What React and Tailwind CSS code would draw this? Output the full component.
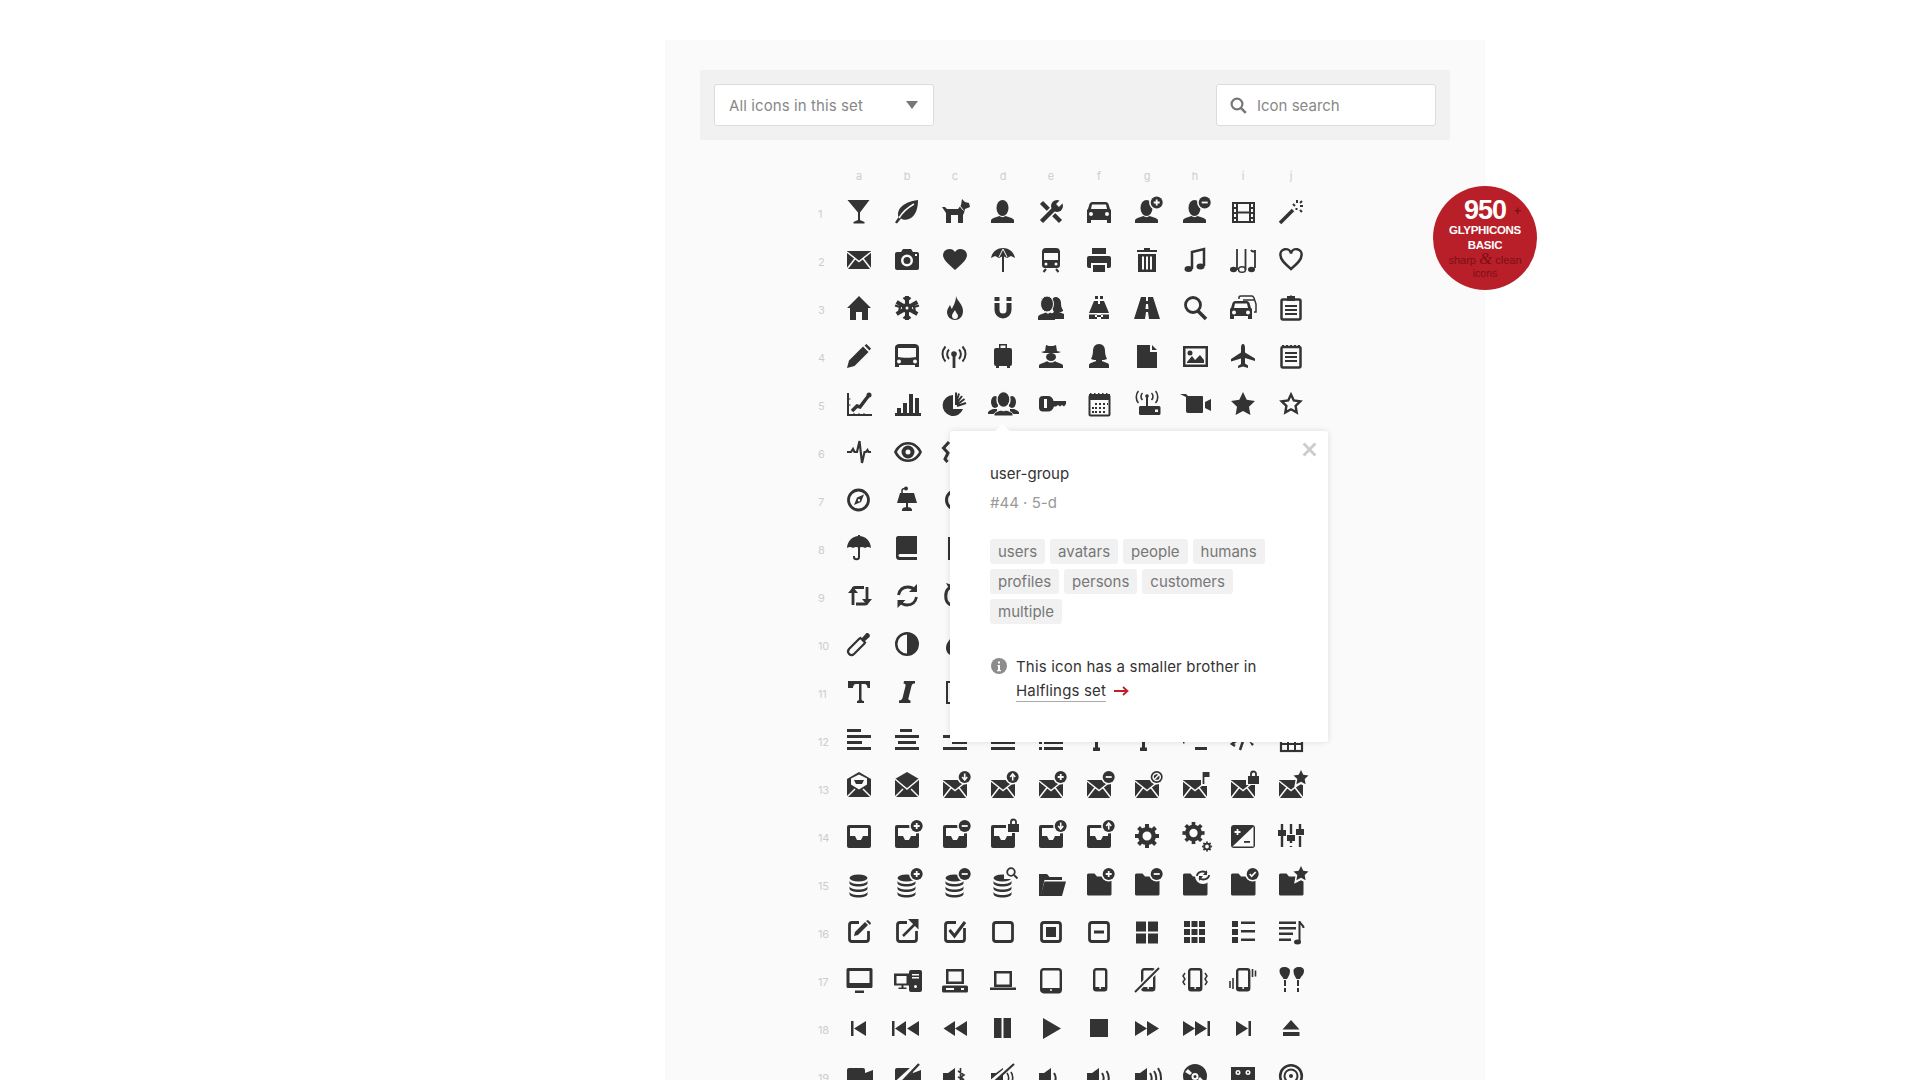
const BG = "#fafafa";

// shorthand for the icon drawings, all on a 26x26 box
const F = ({ d }) => <path d={d} fillRule="evenodd" />;
const K = ({ d, w = 2 }) => <path d={d} fill="none" stroke="#333" strokeWidth={w} />;
const C = ({ d, w = 1.5 }) => <path d={d} fill="none" stroke={BG} strokeWidth={w} />;

function Badge({ kind, x = 22.7, y = 3.5 }) {
  return (
    <g>
      <circle cx={x} cy={y} r="7.6" fill={BG} />
      <circle cx={x} cy={y} r="6" fill="#333" />
      {kind === "plus" && <path d={`M${x - 3} ${y}h6M${x} ${y - 3}v6`} stroke={BG} strokeWidth="1.8" />}
      {kind === "minus" && <path d={`M${x - 3} ${y}h6`} stroke={BG} strokeWidth="1.8" />}
      {kind === "down" && <path d={`M${x} ${y - 3.5}v5M${x - 2.5} ${y}l2.5 3 2.5-3`} stroke={BG} strokeWidth="1.6" fill="none" />}
      {kind === "up" && <path d={`M${x} ${y + 3.5}v-5M${x - 2.5} ${y}l2.5-3 2.5 3`} stroke={BG} strokeWidth="1.6" fill="none" />}
      {kind === "ban" && (
        <g fill="none" stroke={BG} strokeWidth="1.5">
          <circle cx={x} cy={y} r="3.6" />
          <path d={`M${x - 2.5} ${y + 2.5}l5-5`} />
        </g>
      )}
      {kind === "ok" && <path d={`M${x - 3} ${y}l2 2.2 4-4.2`} stroke={BG} strokeWidth="1.7" fill="none" />}
    </g>
  );
}

const Lock = () => (
  <g>
    <rect x="16" y="-5" width="15" height="15" fill={BG} />
    <path d="M18 1h11v8H18z" />
    <path d="M21 1v-2a2.5 2.5 0 015 0v2" fill="none" stroke="#333" strokeWidth="1.8" />
  </g>
);

const StarBadge = () => (
  <g>
    <path d="M23 -6l2.8 5.6 6.2.9-4.5 4.3 1 6.2-5.5-3-5.500 3 1-6.200-4.500-4.300 6.200-.9z" fill={BG} stroke={BG} strokeWidth="2" />
    <path d="M23 -5l2.300 4.800 5.200.7-3.800 3.600.9 5.200-4.600-2.500-4.600 2.500.9-5.200-3.800-3.600 5.200-.7z" />
  </g>
);

const User = () => (
  <g>
    <ellipse cx="12.500" cy="9" rx="6" ry="8" />
    <F d="M1 24v-2.500c0-1.500 2-2.500 4-3l4.500-1.500c1.500 1.500 4.500 1.500 6 0l4.500 1.500c2 .5 4 1.500 4 3V24z" />
  </g>
);

const Mail = () => (
  <g>
    <path d="M1 4h24v18H1z" />
    <C d="M1 5l12 9.500L25 5M1 22l8.500-11M25 22l-8.500-11" w="1.500" />
  </g>
);

const MailDown = ({ children }) => (
  <g>
    <g transform="translate(0 1)">
      <Mail />
    </g>
    {children}
  </g>
);

const Inbox = ({ children }) => (
  <g>
    <F d="M3 2h20a2 2 0 012 2v19a2 2 0 01-2 2H3a2 2 0 01-2-2V4a2 2 0 012-2z M4 5v8h5l2 4h4l2-4h5V5z" />
    {children}
  </g>
);

const Db = ({ children }) => (
  <g>
    <g transform="translate(-.5 0)">
      <ellipse cx="13" cy="7" rx="9" ry="3.500" />
      {[0, 5.500, 11].map((y) => (
        <path key={y} transform={`translate(0 ${y})`} d="M4 9.500c0 2 4 3.500 9 3.500s9-1.500 9-3.500v2.500c0 2-4 3.500-9 3.500s-9-1.500-9-3.500z" />
      ))}
    </g>
    {children}
  </g>
);

const Folder = ({ children }) => (
  <g>
    <path d="M1 4a1.500 1.500 0 011.500-1.500h6l2.500 3h13a1.500 1.500 0 011.500 1.500v16a1.500 1.500 0 01-1.500 1.500h-21A1.500 1.500 0 011 23z" />
    {children}
  </g>
);

function Gear({ x = 13, y = 13, s = 1 }) {
  return (
    <g transform={`translate(${x} ${y}) scale(${s})`}>
      <circle r="6.800" fill="none" stroke="#333" strokeWidth="4.600" />
      {[0, 45, 90, 135, 180, 225, 270, 315].map((a) => (
        <rect key={a} x="-2" y="-12" width="4" height="4" transform={`rotate(${a})`} />
      ))}
    </g>
  );
}

const Sq = ({ children }) => (
  <g>
    <rect x="3.500" y="3.500" width="19" height="19" rx="2.500" fill="none" stroke="#333" strokeWidth="2.800" />
    {children}
  </g>
);

const Speaker = ({ children }) => (
  <g>
    <path d="M1 10h5l7-5v20H1z" />
    {children}
  </g>
);

const row1 = [
  <F d="M1.500 1h22L14 13.500V21l4.500 2v1.500h-11V23l4.500-2v-7.500z" />,
  <g>
    <F d="M24 1c0 8-2 16-9 19-3 1.300-6 .8-8-.5L3 24.500 1 23.500l3.500-5.500C2.500 11 8 3 24 1z" />
    <C d="M20 5C13 9 8 14 5 19" />
  </g>,
  <g>
    <F d="M0 8h3l2 2h11l3-4 1-6 3 3 4 1 1 4-5 2-1 4-1 2v8h-5v-8H9v8H4V14L2 11z" />
    <C d="M17.500 6.500l4 5" w="1" />
  </g>,
  <User />,
  <g>
    <K d="M3.500 3.500l19 19" w="4.500" />
    <C d="M3.500 22.500L16 10" w="7.500" />
    <K d="M3.500 22.500L16 10" w="4.500" />
    <circle cx="19" cy="7" r="6" />
    <C d="M19.500 6.500L25 1" w="4" />
  </g>,
  <F d="M6 3h14c1 0 2 1 2.500 2L24 10c1 .5 1 1 1 2v12h-4v-3H5v3H1V12c0-1 0-1.500 1-2l1.500-5C4 4 5 3 6 3z M6 5.500 5 10h16l-1-4.500z M5 13a2 2 0 100 4 2 2 0 000-4z M21 13a2 2 0 100 4 2 2 0 000-4z" />,
  <g>
    <User />
    <Badge kind="plus" />
  </g>,
  <g>
    <User />
    <Badge kind="minus" />
  </g>,
  <F d="M2 3h23v21H2z M4 5v3h2V5z M4 10v3h2v-3z M4 15v3h2v-3z M4 20v2h2v-2z M21 5v3h2V5z M21 10v3h2v-3z M21 15v3h2v-3z M21 20v2h2v-2z M8 5v7.500h11V5z M8 14.500V22h11v-7.500z" />,
  <g>
    <K d="M2 24L15 11" w="3.600" />
    <K d="M19 1v3M25 7h-3M24 2l-2 2M15 5l2 2M22 11l2 2M18.500 9v2" w="2" />
  </g>,
];

const row2 = [
  <Mail />,
  <F d="M3 5h4l2-3h8l2 3h4a2 2 0 012 2v14a2 2 0 01-2 2H3a2 2 0 01-2-2V7a2 2 0 012-2z M13 7.500a6 6 0 100 12 6 6 0 000-12z M13 10a3.500 3.500 0 110 7 3.500 3.500 0 010-7z M21 7h2v2h-2z" />,
  <path d="M13 23C5 16 1 12 1 8a6.500 6.500 0 0112-3 6.500 6.500 0 0112 3c0 4-4 8-12 15z" />,
  <g>
    <path d="M13 1c6 0 11 4 12 10l-4-2-4 2-4-2-4 2-4-2-4 2C2 5 7 1 13 1z" />
    <K d="M13 9v16" w="2" />
    <C d="M13 2L9 10M13 2l4 8" w="1" />
  </g>,
  <g>
    <F d="M8 1h10a4 4 0 014 4v13a3 3 0 01-3 3H7a3 3 0 01-3-3V5a4 4 0 014-4z M6 6v7h14V6z M8 15.500a1.500 1.500 0 100 3 1.500 1.500 0 000-3z M18 15.500a1.500 1.500 0 100 3 1.500 1.500 0 000-3z" />
    <K d="M8 22l-2.500 3M18 22l2.500 3" w="2" />
  </g>,
  <F d="M6 1h14v6H6z M3 9h20a2 2 0 012 2v8a2 2 0 01-2 2h-2v-5H5v5H3a2 2 0 01-2-2v-8a2 2 0 012-2z M7 18h12v7H7z" />,
  <F d="M10 1h6v2h7v2H3V3h7z M4 7h18v18H4z M8 9.500v13h2v-13z M12 9.500v13h2v-13z M16 9.500v13h2v-13z" />,
  <g>
    <K d="M10 22V5l12-3v17" w="2.500" />
    <ellipse cx="6.500" cy="22" rx="4" ry="3" />
    <ellipse cx="18.500" cy="19.500" rx="4" ry="3" />
  </g>,
  <g>
    <K d="M7 23V2M15.500 23V2M25 21V3c0 2-3 2-4 0" w="1.800" />
    <ellipse cx="3.500" cy="22.500" rx="3.500" ry="2.800" />
    <ellipse cx="12" cy="22.500" rx="3.500" ry="2.800" fill="none" stroke="#333" strokeWidth="1.500" />
    <ellipse cx="21.500" cy="22.500" rx="3.500" ry="2.800" />
  </g>,
  <path d="M13 22C6 16 2.500 12.500 2.500 8.500a5.200 5.200 0 0110.500-2 5.200 5.200 0 0110.500 2c0 4-3.500 7.500-10.500 13.500z" fill="none" stroke="#333" strokeWidth="2.500" />,
];

const row3 = [
  <path d="M13 1l12 12h-3v12h-6v-8h-6v8H4V13H1z" />,
  <g>
    <K d="M13 1v24M2.600 7l20.800 12M2.600 19l20.800-12" w="4" />
    <circle cx="13" cy="13" r="5" />
    <circle cx="13" cy="13" r="1.500" fill={BG} />
    <K d="M9.500 2.500l3.500 3.500 3.500-3.500M9.500 23.500l3.500-3.500 3.500 3.500M1 10.500l5 1.500-1 5M25 10.500l-5 1.500 1 5" w="2.200" />
  </g>,
  <F d="M14 1c1 5 7 8 7 15 0 6-4 9-8 9s-8-3-8-8c0-3 2-5 3-7 1 2 1 3 2 4 1-3 4-7 4-13z M13 15c-2 3-3 4-3 6 0 2 1.500 3 3 3s3-1 3-3c0-2-2-3-3-6z" />,
  <g>
    <K d="M7 8v7a6 6 0 0012 0V8" w="5" />
    <path d="M4.500 2h5v4h-5zM16.500 2h5v4h-5z" />
  </g>,
  <g>
    <path d="M17.500 2c3 0 5.500 2.500 5.500 6 0 3 .5 5 2 7v1c-1 1-3 1-4 1l5 2v5H16v-3l-3-2c1-1 2-1 3-2-1-2-2-4-2-9 0-3 1-6 3.500-6z" />
    <ellipse cx="9" cy="9" rx="6.500" ry="8" stroke={BG} strokeWidth="1" />
    <path d="M0 25v-3c0-1.500 2-2.500 4-3l4-1.500c1 1.500 3 1.500 4 0l3 1.500c1 .5 2 1.500 2 3v3z" />
  </g>,
  <F d="M9 1h3v3H9z M14 1h3v3h-3z M8 6h4v3h2V6h4l5 12H3z M3 19.500h8V24H3z M15 19.500h8V24h-8z M9 20h8v2H9z" />,
  <F d="M7 2h5v4h2V2h5l7 22H15l-1-7h-2l-1 7H0z M12 9l-.5 5h3L14 9z" />,
  <g>
    <circle cx="11" cy="10" r="7.500" fill="none" stroke="#333" strokeWidth="2.800" />
    <K d="M16 16l8 8" w="3.500" />
  </g>,
  <g>
    <K d="M9 4V2.500c0-1 1-1.500 2-1.500h11c1 0 1.500 1 2 2l2 6v8h-2M13 5V5h11" w="1.500" />
    <F d="M5 6h12c1 0 2 1 2.500 2L21 13c1 .5 1 1 1 2v9h-4v-3H4v3H0v-9c0-1 0-1.500 1-2l1.500-5C3 7 4 6 5 6z M5 8.500 4 13h14l-1-4.500z M4 15.500a2 2 0 100 4 2 2 0 000-4z M18 15.500a2 2 0 100 4 2 2 0 000-4z" />
  </g>,
  <g>
    <rect x="3.500" y="4.500" width="19" height="20" rx="1.500" fill="none" stroke="#333" strokeWidth="2.500" />
    <path d="M9 1h3v-.5h2V1h3v5H9z" />
    <K d="M7 11h12M7 15h12M7 19h12" w="2" />
  </g>,
];

const row4 = [
  <F d="M1 25l2-7.500L17 3.500l5.500 5.500L8.500 23z M18.500 2.500l2-1.500 4.500 4.500-1.500 2z M5 19l2.500 2.500" />,
  <F d="M6 1h14c3 0 5 1 5 4v19h-4v-2H5v2H1V5c0-3 2-4 5-4z M4 5v9c3 1 15 1 18 0V5z M5 16.500a2 2 0 100 4 2 2 0 000-4z M21 16.500a2 2 0 100 4 2 2 0 000-4z" />,
  <g>
    <circle cx="12" cy="11" r="2.800" />
    <K d="M12 12v13" w="2.800" />
    <K d="M7 6.500c-2.500 2.500-2.500 7 0 9.500M17 6.500c2.500 2.500 2.500 7 0 9.500M3.500 3.500C-.5 8-.5 14 3.500 18.500M20.500 3.500c4 4.500 4 10.500 0 15" w="2" />
  </g>,
  <F d="M9 1h8v4h-1.500V2.500h-5V5H9z M6 5h14a2 2 0 012 2v14a2 2 0 01-2 2H6a2 2 0 01-2-2V7a2 2 0 012-2z M6 23h3v2H6z M17 23h3v2h-3z" />,
  <g>
    <path d="M7 8l1-6 3 1h4l3-1 1 6 4 1-3 1H6L3 9z" />
    <ellipse cx="13" cy="14" rx="5" ry="4" />
    <path d="M1 25v-2.500c0-2 6-2.500 8-4.500 2 2 6 2 8 0 2 2 8 2.500 8 4.500V25z" />
  </g>,
  <g>
    <path d="M13 1c4 0 6 3 6 7 0 3 1 6 2 8-2 1-4 1-5 1v1c2 1 7 2 7 4v3H3v-3c0-2 5-3 7-4v-1c-1 0-3 0-5-1 1-2 2-5 2-8 0-4 2-7 6-7z" />
  </g>,
  <F d="M3 2h13v7h7v16H3z M18 2l5 5h-5z" />,
  <F d="M1 3h25v21H1z M3.500 5.500v16h20v-16z M5 19l5-6 3 4 5-5 4 5v3H5z M8 7.500a2.500 2.500 0 100 5 2.500 2.500 0 000-5z" />,
  <path d="M13 1c1.500 0 2 2 2 4v4.500l10 6v2.500l-10-3v5.500l3 2V25l-5-1.500L8 25v-2l3-2v-5.500L1 18.500V16l10-6.500V5c0-2 .5-4 2-4z" />,
  <g>
    <rect x="3.500" y="4" width="19" height="20.500" rx="1.500" fill="none" stroke="#333" strokeWidth="2.500" />
    <path d="M4 2h2v2H4zM8 2h2v2H8zM12 2h2v2h-2zM16 2h2v2h-2zM20 2h2v2h-2z" />
    <K d="M7 10h12M7 14h12M7 18h12" w="2" />
  </g>,
];

const row5 = [
  <g>
    <K d="M2 2v22h24" w="2" />
    <K d="M6 20l5-5 3 1 6-8 4-5" w="3.500" />
    <circle cx="23" cy="4" r="2.500" />
    <K d="M4.500 8h-2M4.500 14h-2M8 23v-1M13 23v-1M18 23v-1" w="1" />
  </g>,
  <F d="M1 22h26v3H1z M3 17h4v5H3z M9 12h4v10H9z M15 3h4v19h-4z M21 7h4v15h-4z" />,
  <g>
    <path d="M11 4a10.500 10.500 0 1010 14H11z" />
    <K d="M14 1.500V14M17 2.500L14 12M20 5l-6 8M22.500 8l-8 6M24 12l-9 3" w="2" />
  </g>,
  <g>
    <ellipse cx="5" cy="11" rx="4" ry="6" />
    <ellipse cx="22" cy="11" rx="4" ry="6" />
    <path d="M-2 23v-1.500c0-1.500 3-2.500 5-3.500h4v5zM29 23v-1.500c0-1.500-3-2.500-5-3.500h-4v5z" />
    <ellipse cx="13.500" cy="8.500" rx="6.500" ry="8" fill="#333" stroke={BG} strokeWidth="1.400" />
    <path d="M4 25v-1.500c0-2 4-3.500 7-4.500 1 1 4 1 5 0 3 1 7 2.500 7 4.500V25z" stroke={BG} strokeWidth="1" />
  </g>,
  <F d="M5 5h5c3 0 5 2 5.500 5H28v3l-2 2.500-2-1.500-2 1.500-2-1.500-2 1.500h-2c-1 3-3 5-6 5H5a4 4 0 01-4-4V9a4 4 0 014-4z M6 8v9h3V8z" />,
  <g>
    <rect x="3.500" y="4.500" width="20" height="20" rx="1" fill="none" stroke="#333" strokeWidth="2" />
    <path d="M3 3h21v6H3z" />
    <path d="M4 2h1.500v1H4zM8 2h1.500v1H8zM12 2h1.500v1H12zM16 2h1.500v1H16zM20 2h1.500v1H20z" />
    <path d="M9 12h2v2H9zM13 12h2v2h-2zM17 12h2v2h-2zM21 12h1v2h-1zM6 16h2v2H6zM9 16h2v2H9zM13 16h2v2h-2zM17 16h2v2h-2zM6 20h2v2H6zM9 20h2v2H9zM13 20h2v2h-2zM17 20h2v2h-2z" />
  </g>,
  <g>
    <circle cx="13" cy="5" r="1.800" />
    <K d="M13 6v10" w="2" />
    <K d="M8.500 2c-2 2-2 5 0 7M17.500 2c2 2 2 5 0 7M4.500 0c-3 3-3 9 0 12M21.500 0c3 3 3 9 0 12" w="1.600" />
    <path d="M7 15h18a1.500 1.500 0 011.500 1.500v6A1.500 1.500 0 0125 24H6.500A1.500 1.500 0 015 22.500v-6C5 15 6 15 7 15z" />
    <path d="M21 18.500h3v2.500h-3z" fill={BG} />
  </g>,
  <path d="M-2 3h6l2 2h14a1 1 0 011 1v15a1 1 0 01-1 1H6a2 2 0 01-2-2V6z M23 11l6-3v12l-6-3z" />,
  <path d="M13 1l3.700 7.800 8.300 1.100-6 5.900 1.400 8.200L13 20l-7.400 4 1.400-8.200-6-5.900 8.300-1.100z" />,
  <path d="M13 3.500l2.800 6 6.500.9-4.700 4.500 1.100 6.500-5.700-3.100-5.700 3.100 1.100-6.500-4.700-4.500 6.500-.9z" fill="none" stroke="#333" strokeWidth="2.400" />,
];

const row6 = [
  <path d="M1 13h4l2-3 1.500 3 2.500 0L13.500 2 16 24l2.500-11h1.500l1.500-2 1 2h2.500" fill="none" stroke="#333" strokeWidth="2.200" />,
  <F d="M14 3C7 3 2 8 0 13c2 5 7 10 14 10s12-5 14-10c-2-5-7-10-14-10z M14 5.500c-5 0-9 3.500-11 7.500 2 4 6 7.500 11 7.500s9-3.500 11-7.500c-2-4-6-7.500-11-7.500z M14 6.500a6.500 6.500 0 100 13 6.500 6.500 0 000-13z M14 10.500a2.500 2.500 0 110 5 2.500 2.500 0 010-5z" />,
  <K d="M7 3L1.500 9 6 14l-3 6 2.500 3" w="3" />,
];

const row7 = [
  <g>
    <circle cx="12.500" cy="13" r="10" fill="none" stroke="#333" strokeWidth="2.800" />
    <F d="M18 7.500l-3 7.500-7 3 3-7.500z M13 12a1.200 1.200 0 100 2.400 1.200 1.200 0 000-2.400z" />
  </g>,
  <g>
    <K d="M8 6V3.500C8 2 9 1.500 11 1.500" w="1.500" />
    <circle cx="12" cy="1.500" r="2" />
    <path d="M6 6h14l3 10H3z" />
    <path d="M12 16h2v5h-2zM8 23c0-2 2-3 5-3s5 1 5 3v1H8z" />
  </g>,
  <g>
    <circle cx="14" cy="13" r="9.500" fill="none" stroke="#333" strokeWidth="3" />
    <circle cx="13" cy="13" r="3" />
  </g>,
];

const row8 = [
  <g>
    <path d="M13 1c7 0 11.500 5 12 12-2-1.500-4-1.500-6 0-2-1.500-4-1.500-6 0-2-1.500-4-1.500-6 0-2-1.500-4-1.500-6 0C1.500 6 6 1 13 1z" />
    <path d="M12 0h2v2h-2z" />
    <K d="M13 12v10c0 3-5 3-5 0v-1" w="2" />
  </g>,
  <F d="M4 1h19v18H6c-1.200 0-1.500 1-1.500 1.500S5 22 6 22h17v3H5c-2 0-3-1.500-3-3V3c0-1 1-2 2-2z" />,
  <path d="M6 2h3v23H6z" />,
];

const row9 = [
  <g>
    <K d="M7 22V6.500c0-1.500 1-2 2-2h9" w="2.800" />
    <K d="M21 4v15c0 1.500-1 2-2 2H10" w="2.800" />
    <path d="M2 10l5-6 5 6zM16 16l5 6 5-6z" />
  </g>,
  <g>
    <K d="M4.500 12C5.500 7 9 4 14 4c3 0 5 1 7 3M22.500 14C21.500 19 18 22 13 22c-3 0-5-1-7-3" w="2.800" />
    <path d="M23 1v8h-8zM3.500 25v-8h8z" />
  </g>,
  <g>
    <K d="M6 6C3 9 3 17 6 20c2 2 4 3 7 3M13 3c-3 0-5 1-7 3" w="3" />
    <path d="M4 0l6 2-2 5z" />
  </g>,
];

const row10 = [
  <g>
    <K d="M14 7L3 18c-3 4 2 8 5 5L19 12" w="2.200" />
    <path d="M13 7l6 6 1.500-1.500L19 10l4.500-4c1.500-2-1.500-5-3.500-3.500L16 7l-1.500-1.500z" />
  </g>,
  <F d="M13 1a12 12 0 100 24 12 12 0 000-24z M13 3.500a9.500 9.500 0 000 19z" />,
  <F d="M13 1C9 8 4 11 4 17c0 5 4 8 9 8s9-3 9-8c0-6-5-9-9-16z M8 17c0 2 1 4 3 5-2-2-2-4 0-7z" />,
];

const row11 = [
  <path d="M2 2h22v7h-2.500c0-2-1-4-3-4h-3v15c0 1 1 2 2.500 2v2h-7v-2c1.500 0 2-1 2-2V5h-3c-2 0-3 2-3 4H2z" />,
  <path d="M10 2h11v2.500c-2 0-3 .5-3.500 2.500l-3 12c-.5 1.500.5 2.500 2 2.500V24H5v-2.500c2 0 3-1 3.500-2.500l3-12c.5-1.500-.5-2.500-2-2.500z" />,
  <path d="M4 2h4v2H6v19h2v2H4z" />,
];

const lines = (arr) => (
  <g>
    {arr.map(([x, w], i) => (
      <rect key={i} x={x} y={2 + i * 6} width={w} height="3" />
    ))}
  </g>
);

const row12 = [
  lines([[1, 14], [1, 24], [1, 15], [1, 24]]),
  lines([[6, 12], [1, 24], [4, 18], [1, 24]]),
  lines([[11, 14], [1, 24], [10, 15], [1, 24]]),
  lines([[1, 24], [1, 24], [1, 24], [1, 24]]),
  <path d="M1 14h3v3H1zM1 20h3v3H1zM6 14h19v3H6zM6 20h19v3H6z" />,
  <path d="M9 2h3v21H9zM7 20.500h7V24H7z" />,
  <path d="M8 2h3v21H8zM6 20.500h7V24H6z" />,
  <path d="M13 20h12v3H13zM1 15h1.500v1.500H1z" />,
  <g>
    <K d="M15 8l-5 15" w="2.500" />
    <K d="M6 14l-4 3 3 2" w="2.500" />
    <path d="M19 14l5 3-2 2z" />
  </g>,
  <g>
    <rect x="3" y="3" width="21" height="21" fill="none" stroke="#333" strokeWidth="2.200" />
    <K d="M10 10v13M17 10v13M2 17h22" w="2" />
  </g>,
];

const row13 = [
  <g>
    <path d="M13 -3L25 4v18H1V4z" />
    <path d="M5 3.500l8-4 8 4v6l-8 5-8-5z" fill={BG} />
    <path d="M8 5h10l-2 4H10z" />
    <C d="M1 22l8-8M25 22l-8-8" w="1.500" />
  </g>,
  <g>
    <path d="M13 -3L25 4v18H1V4z" />
    <C d="M1 4l12 10 12-10M1 22l8-8M25 22l-8-8" w="1.500" />
  </g>,
  <MailDown><Badge kind="down" y={2} /></MailDown>,
  <MailDown><Badge kind="up" y={2} /></MailDown>,
  <MailDown><Badge kind="plus" y={2} /></MailDown>,
  <MailDown><Badge kind="minus" y={2} /></MailDown>,
  <MailDown><Badge kind="ban" y={2} /></MailDown>,
  <MailDown>
    <rect x="19" y="-4" width="10" height="15" fill={BG} />
    <K d="M21.500 9V-3" w="1.800" />
    <path d="M21 -3h6.500v5H21z" />
  </MailDown>,
  <MailDown><Lock /></MailDown>,
  <MailDown><StarBadge /></MailDown>,
];

const row14 = [
  <Inbox />,
  <Inbox><Badge kind="plus" y={3} /></Inbox>,
  <Inbox><Badge kind="minus" y={3} /></Inbox>,
  <Inbox><Lock /></Inbox>,
  <Inbox><Badge kind="down" y={3} /></Inbox>,
  <Inbox><Badge kind="up" y={3} /></Inbox>,
  <Gear />,
  <g>
    <Gear x={11.5} y={10} s={0.92} />
    <Gear x={25} y={23.5} s={0.42} />
  </g>,
  <g>
    <rect x="1" y="2" width="24" height="23" rx="3" />
    <path d="M23.500 3.500L2.500 23.500h21z" fill={BG} />
    <C d="M4.500 9h6M7.500 6v6" w="1.800" />
    <path d="M14 18h6v1.800h-6z" />
  </g>,
  <g>
    <K d="M4 1v6M4 13v11M13 1v10M13 18v2M13 23v1M22 1v5M22 13v11" w="2.400" />
    <path d="M0 7h8v6H0zM9 12h8v6H9zM18 6h8v6h-8z" />
  </g>,
];

const row15 = [
  <Db />,
  <Db><Badge kind="plus" y={3} /></Db>,
  <Db><Badge kind="minus" y={3} /></Db>,
  <Db>
    <rect x="14" y="-5" width="16" height="13" fill={BG} />
    <circle cx="21" cy="1" r="3.800" fill="none" stroke="#333" strokeWidth="1.800" />
    <K d="M24 4l3.500 3.500" w="2" />
  </Db>,
  <g>
    <path d="M1 3h8l2.500 3H24v3H6.500L3 25H1z" />
    <path d="M6.500 10.500H28L24 25H2.500z" />
  </g>,
  <Folder><Badge kind="plus" y={3} /></Folder>,
  <Folder><Badge kind="minus" y={3} /></Folder>,
  <Folder>
    <circle cx="21" cy="5" r="8" fill={BG} />
    <K d="M15 5c0-4 6-6 10-3M27 4c0 4-6 6-10 3" w="1.800" />
    <path d="M25 -1v5h-4zM17 10V5h4z" />
  </Folder>,
  <Folder><Badge kind="ok" y={3} /></Folder>,
  <Folder><StarBadge /></Folder>,
];

const row16 = [
  <Sq>
    <rect x="13" y="-2" width="14" height="14" fill={BG} />
    <F d="M8 17l1-4L19 3l3 3-10 10z" />
    <path d="M20 2l2-1 3 3-1 2z" />
  </Sq>,
  <Sq>
    <rect x="13" y="-2" width="14" height="14" fill={BG} />
    <K d="M9 17l13-13" w="2.500" />
    <path d="M14 0h10.500v10.500z" />
  </Sq>,
  <Sq>
    <rect x="14" y="-2" width="14" height="11" fill={BG} />
    <K d="M7.500 11l5 6L23 3" w="3" />
  </Sq>,
  <Sq />,
  <Sq><path d="M8 8h10v10H8z" /></Sq>,
  <Sq><path d="M8 11.500h10v3H8z" /></Sq>,
  <path d="M2 2.500h10v10H2zM14 2.500h10v10H14zM2 14.500h10v10H2zM14 14.500h10v10H14z" />,
  <path d="M2 2h6v6H2zM9.500 2h6v6h-6zM17 2h6v6h-6zM2 10h6v6H2zM9.500 10h6v6h-6zM17 10h6v6h-6zM2 18h6v6H2zM9.500 18h6v6h-6zM17 18h6v6h-6z" />,
  <path d="M2 2h6v6H2zM11 2.500h14v2.500H11zM2 10h6v6H2zM11 11h14v2.500H11zM2 18h6v6H2zM11 19.500h14v2.500H11z" />,
  <g>
    <path d="M1 2.500h17v2.500H1zM1 8h17v2.500H1zM1 13.500h14v2.500H1zM1 19.500h12v2.500H1z" />
    <K d="M21.500 23V2c0 3 4 3 4 7" w="2" />
    <ellipse cx="19.500" cy="23" rx="3.500" ry="2.500" />
  </g>,
];

const Phone = ({ x = 7, w = 12 }) => (
  <g>
    <rect x={x + 1.2} y="2.200" width={w} height="21" rx="2" fill="none" stroke="#333" strokeWidth="2.400" />
    <path d={`M${x} 20h${w + 2}v2H${x}z`} />
    <circle cx={x + 1.2 + w / 2} cy="21" r="1" fill={BG} />
  </g>
);

const row17 = [
  <F d="M2 1h23a1.500 1.500 0 011.500 1.500v17a1.500 1.500 0 01-1.500 1.500H2a1.500 1.500 0 01-1.500-1.500v-17A1.500 1.500 0 012 1z M3.500 4v12h20V4z M9 23.500h9V26H9z" />,
  <F d="M0 6.500h15v12H9.500v2h3v1.500h-8v-1.500h3v-2H0z M2.500 9v7.500h10V9z M17 3h9a2 2 0 012 2v18a2 2 0 01-2 2h-9a2 2 0 01-2-2V5a2 2 0 012-2z M18 7v1.500h7V7z M18 10v1.500h7V10z M21.500 18a1.500 1.500 0 100 3 1.500 1.500 0 000-3z" />,
  <F d="M4 2h18v15H4z M6.500 4.500v10h13v-10z M1.500 18.500h23a1.500 1.500 0 011.500 1.500v4a1.500 1.500 0 01-1.500 1.500h-23A1.500 1.500 0 010 24v-4a1.500 1.500 0 011.500-1.500z M4 21v2h8v-2z M19 21v2h3v-2z" />,
  <F d="M4 4h18v16H4z M6.500 6.500v11h13v-11z M0 20.500h26V23H0z" />,
  <g>
    <rect x="3.200" y="2.200" width="19.600" height="23" rx="2.500" fill="none" stroke="#333" strokeWidth="2.400" />
    <path d="M3 21h20v4H3z" />
    <circle cx="13" cy="23" r="1" fill={BG} />
  </g>,
  <Phone />,
  <g>
    <Phone />
    <path d="M1 25L25 1" stroke={BG} strokeWidth="5" />
    <path d="M1 25L25 1" stroke="#333" strokeWidth="2" />
  </g>,
  <g>
    <Phone x={6} w={12} />
    <K d="M3 6L1 9l2 3-2 3 2 3M23 6l2 3-2 3 2 3-2 3" w="1.500" />
  </g>,
  <g>
    <Phone x={6} w={12} />
    <K d="M0 14v7M3 11v11M22.500 2v8M25.500 3.500v6" w="1.600" />
  </g>,
  <g>
    <path d="M6 0c4 0 6 2 6 4 0 4-2 6-3 8H5.500c-1-3-4-4-4-8 0-3 2-4 4.500-4zM21 0c3 0 5 1 5 4 0 4-3 5-4 8h-3.500c-1-2-3-4-3-8 0-2 2-4 5.500-4z" />
    <path d="M6 13h2v6H6zM19 13h2v6h-2zM6 21h2v4H6zM19 21h2v4h-2z" />
  </g>,
];

const row18 = [
  <path d="M5 6h2.500v15H5zM20 6v15L8 13.500z" />,
  <path d="M-2 6H.5v15H-2zM12 6v15L1 13.500zM25 6v15L13 13.500z" />,
  <path d="M13 6v15L1.500 13.500zM25 6v15L13 13.500z" />,
  <path d="M4 3h7.500v20H4zM13.500 3H21v20h-7.500z" />,
  <path d="M5 3l18 10.500L5 24z" />,
  <path d="M4 4h18v18H4z" />,
  <path d="M1 6v15l12-7.500zM13 6v15l12-7.500z" />,
  <path d="M1 6v15l12-7.500zM13 6v15l12-7.500zM25.500 6H28v15h-2.500z" />,
  <path d="M6 6v15l12-7.500zM18.500 6H21v15h-2.500z" />,
  <path d="M13 5l8.500 9.500h-17zM5 17h16.500v4H5z" />,
];

const row19 = [
  <path d="M3 5h14a2 2 0 012 2v3l8-3v14H1V7a2 2 0 012-2z" />,
  <g>
    <path d="M3 5h14a2 2 0 012 2v3l8-3v14H1V7a2 2 0 012-2z" />
    <path d="M2 21L25 0" stroke={BG} strokeWidth="5" />
    <path d="M6 21L25 1" stroke="#333" strokeWidth="2.400" />
  </g>,
  <Speaker>
    <K d="M16 8l6 4-3 2 3 3-6-3M18.500 5v16l4-3" w="1.600" />
  </Speaker>,
  <Speaker>
    <K d="M17 10c2 3 2 7 0 10M21 9c2 3 2 8 0 12" w="1.600" />
    <path d="M1 19L24 0" stroke={BG} strokeWidth="4" />
    <path d="M3 20L24 1" stroke="#333" strokeWidth="2.200" />
  </Speaker>,
  <Speaker><K d="M16 10c2 3 2 7 0 10" w="2" /></Speaker>,
  <Speaker><K d="M16 10c2 3 2 7 0 10M20.500 8c3 4 3 10 0 14" w="2" /></Speaker>,
  <Speaker><K d="M16 10c2 3 2 7 0 10M20 8c3 4 3 10 0 14M24 5c4 6 4 14 0 20" w="2" /></Speaker>,
  <F d="M13 1a12 12 0 100 24 12 12 0 000-24z M13 10a3.500 3.500 0 110 7 3.500 3.500 0 010-7z M13 12a1.500 1.500 0 100 3 1.500 1.500 0 000-3z M3 9l3-3 4 4-2 2z M16 16l2-2 3 3-2 3z" />,
  <F d="M1 4h24v22H1z M8 7a2.500 2.500 0 100 5 2.500 2.500 0 000-5z M18 7a2.500 2.500 0 100 5 2.500 2.500 0 000-5z M8 8.500a1 1 0 110 2 1 1 0 010-2z M18 8.500a1 1 0 110 2 1 1 0 010-2z" />,
  <g>
    <circle cx="13" cy="13" r="10.800" fill="none" stroke="#333" strokeWidth="2.600" />
    <circle cx="13" cy="13" r="6.500" fill="none" stroke="#333" strokeWidth="2" />
    <circle cx="13" cy="13" r="2" />
  </g>,
];

const ROWS = [row1, row2, row3, row4, row5, row6, row7, row8, row9, row10, row11, row12, row13, row14, row15, row16, row17, row18, row19];
const LETTERS = ["a", "b", "c", "d", "e", "f", "g", "h", "i", "j"];

function Tag({ children }) {
  return (
    <span className="h-[25px] px-2 rounded-[3px] bg-[#f1f1f1] text-[15px] leading-[25px] text-[#777]">
      {children}
    </span>
  );
}

function IconRow({ num, icons }) {
  return (
    <div className="flex h-12 items-center">
      <span className="w-[17px] pt-[4px] text-[11px] tracking-[-0.3px] text-[#cdcdcd]">{num}</span>
      {icons.map((icon, i) => (
        <div key={i} className="w-12 h-12 flex items-center justify-center">
          <svg width="26" height="26" viewBox="0 0 26 26" fill="#333" className="overflow-visible">
            {icon}
          </svg>
        </div>
      ))}
    </div>
  );
}

export default function App() {
  return (
    <div className="h-screen overflow-hidden bg-white pt-10 pl-[665px] font-['Inter',sans-serif]">
      <div className="relative w-[820px] bg-[#fafafa] px-[35px] pt-[30px]">

        {/* toolbar */}
        <div className="flex h-[70px] w-[750px] items-center justify-between rounded-[2px] bg-[#f1f1f1] pl-[14px] pr-[14px]">
          <div className="flex h-[42px] w-[220px] items-center justify-between rounded-[3px] border border-[#dcdcdc] bg-white pl-[14px] pr-[15px] text-[15px] tracking-[0.1px] text-[#888]">
            <span className="pt-[2px]">All icons in this set</span>
            <span className="border-x-[6px] border-t-[8px] border-x-transparent border-t-[#777]" />
          </div>
          <div className="flex h-[42px] w-[220px] items-center gap-[10px] rounded-[3px] border border-[#dcdcdc] bg-white pl-[13px] text-[15px] text-[#888]">
            <svg width="17" height="17" viewBox="0 0 17 17" fill="none" stroke="#777" className="shrink-0">
              <circle cx="7" cy="7" r="5.400" strokeWidth="2.200" />
              <path d="M10.800 10.800l5 5" strokeWidth="2.600" />
            </svg>
            <span className="pt-[2px]">Icon search</span>
          </div>
        </div>

        {/* the grid */}
        <div className="ml-[118px] mt-[28px]">
          <div className="flex h-5 pl-[17px] items-start">
            {LETTERS.map((l) => (
              <span key={l} className="w-12 text-center text-[11px] text-[#cdcdcd]">{l}</span>
            ))}
          </div>
          {ROWS.map((icons, i) => (
            <IconRow key={i} num={i + 1} icons={icons} />
          ))}
        </div>

        {/* popover */}
        <div className="absolute left-[285px] top-[391px] h-[311px] w-[378px] rounded-[2px] bg-white pl-10 pt-[33px] shadow-[0_0_6px_rgba(0,0,0,0.12)]">
          <span className="absolute left-[47px] top-[-5px] h-[11px] w-[11px] rotate-45 bg-white" />
          <svg width="15" height="15" viewBox="0 0 14 14" className="absolute right-[11px] top-[11px]">
            <path d="M1.500 1.500l11 11M12.500 1.500l-11 11" stroke="#ccc" strokeWidth="2.600" />
          </svg>
          <div className="text-[15px] leading-5 text-[#333]">user-group</div>
          <div className="mt-[9px] text-[15px] leading-5 text-[#999]">#44 · 5-d</div>
          <div className="mt-[26px] flex w-[290px] flex-wrap gap-[5px]">
            {["users", "avatars", "people", "humans", "profiles", "persons", "customers", "multiple"].map((t) => (
              <Tag key={t}>{t}</Tag>
            ))}
          </div>
          <div className="mt-[31px] flex gap-[9px]">
            <svg width="16" height="16" viewBox="0 0 16 16" className="mt-[3px] ml-px shrink-0">
              <circle cx="8" cy="8" r="8" fill="#8c8c8c" />
              <path d="M7 3.500h2v2H7zM6.500 7H9v5h1v1.200H6v-1.200h1V8.200h-.5z" fill="#fff" />
            </svg>
            <div className="text-[15px] leading-[24px] tracking-[0.18px] text-[#333]">
              This icon has a smaller brother in
              <div className="mt-px flex items-center gap-[8px]">
                <span className="border-b border-[#aaa] leading-[21px]">Halflings set</span>
                <svg width="15" height="10" viewBox="0 0 15 10">
                  <path d="M0 5h13M9 1l4.500 4L9 9" fill="none" stroke="#c0202a" strokeWidth="1.800" />
                </svg>
              </div>
            </div>
          </div>
        </div>

        {/* red seal */}
        <div className="absolute left-[768px] top-[146px] flex h-[104px] w-[104px] flex-col items-center rounded-full bg-[#b81f28] pt-[11px] font-['Liberation_Sans',sans-serif] text-white">
          <div className="relative text-[27px] font-bold leading-[26px] tracking-[-1px]">
            950
            <span className="absolute left-[50px] top-[1px] text-[12px] text-[#7a1018]">+</span>
          </div>
          <div className="text-[11.500px] font-bold leading-[15px] tracking-[-0.3px]">GLYPHICONS</div>
          <div className="text-[11.500px] font-bold leading-[15px] tracking-[-0.3px]">BASIC</div>
          <div className="mt-px text-[11px] leading-[13px] text-[#7a1018]">
            sharp <span className="font-['Liberation_Serif',serif] text-[17px] italic leading-[10px]">&amp;</span> clean
          </div>
          <div className="text-[10.500px] leading-[12px] text-[#7a1018]">icons</div>
        </div>

      </div>
    </div>
  );
}
